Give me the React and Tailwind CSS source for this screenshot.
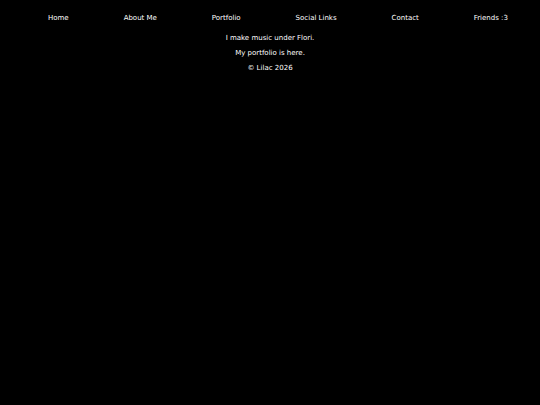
export default function App() {
  const links = ['Home', 'About Me', 'Portfolio', 'Social Links', 'Contact', 'Friends :3'];
  return (
    <div className="min-h-[405px] bg-black text-white font-['DejaVu_Sans',sans-serif] text-[7px]">
      <nav className="flex justify-between pl-[48px] pr-[32px] pt-[14px]">
        {links.map((l) => (
          <a key={l} href="#" className="leading-[8px]">{l}</a>
        ))}
      </nav>
      <div className="flex flex-col items-center gap-[7px] pt-[12px] leading-[8px]">
        <p>I make music under Flori.</p>
        <p>My portfolio is here.</p>
        <p>© Lilac 2026</p>
      </div>
    </div>
  );
}
